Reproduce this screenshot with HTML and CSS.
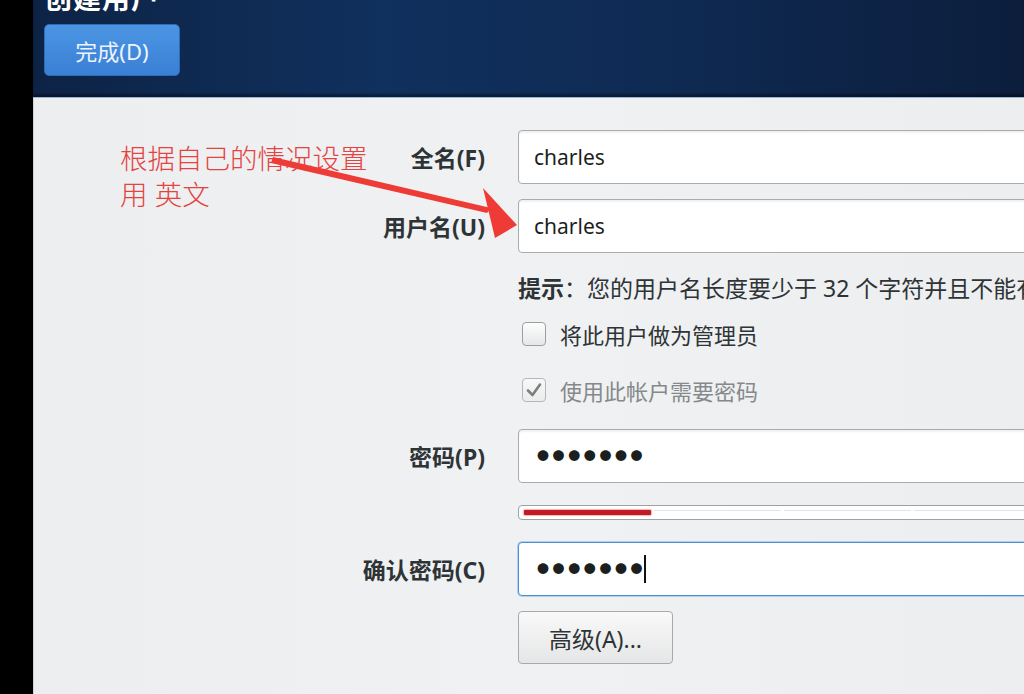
FILE: index.html
```html
<!DOCTYPE html>
<html lang="zh-CN">
<head>
    <meta charset="UTF-8">
    <meta name="viewport" content="width=device-width, initial-scale=1.0">
    <title>创建用户</title>
    <link rel="stylesheet" href="styles.css">
</head>
<body>
    <div class="screen">
        <div class="edge"></div>

        <div class="window">
            <header class="header">
                <h1 class="title">创建用户</h1>
                <button class="done-btn">完成(D)</button>
            </header>

            <main class="content">
                <div class="note">
                    <p>根据自己的情况设置</p>
                    <p>用 英文</p>
                    <svg class="arrow" width="300" height="90" viewBox="0 0 300 90">
                        <polygon points="0,12 2,6 220,57 216,62" fill="#ef3b36"/>
                        <polygon points="212,37 246,74 224,87" fill="#ef3b36"/>
                    </svg>
                </div>

                <div class="row row-full">
                    <label class="label">全名(F)</label>
                    <div class="entry">charles</div>
                </div>

                <div class="row row-user">
                    <label class="label">用户名(U)</label>
                    <div class="entry">charles</div>
                </div>

                <div class="row row-hint">
                    <span></span>
                    <p class="hint"><b>提示</b>：您的用户名长度要少于 32 个字符并且不能有空格。</p>
                </div>

                <div class="row row-admin">
                    <span></span>
                    <div class="check">
                        <span class="box"></span>
                        <span>将此用户做为管理员</span>
                    </div>
                </div>

                <div class="row row-pwreq">
                    <span></span>
                    <div class="check check-off">
                        <span class="box">
                            <svg width="18" height="18" viewBox="0 0 18 18">
                                <path d="M3 9.5 L7.5 14 L15 3.5" fill="none" stroke="#7c7f82" stroke-width="2.6" stroke-linecap="round" stroke-linejoin="round"/>
                            </svg>
                        </span>
                        <span>使用此帐户需要密码</span>
                    </div>
                </div>

                <div class="row row-pw">
                    <label class="label">密码(P)</label>
                    <div class="entry dots">●●●●●●●</div>
                </div>

                <div class="row row-meter">
                    <span></span>
                    <div class="meter">
                        <span class="seg seg-red"></span>
                        <span class="seg"></span>
                        <span class="seg"></span>
                        <span class="seg"></span>
                    </div>
                </div>

                <div class="row row-confirm">
                    <label class="label">确认密码(C)</label>
                    <div class="entry dots focused">●●●●●●●<span class="caret"></span></div>
                </div>

                <div class="row row-adv">
                    <span></span>
                    <div><button class="adv-btn">高级(A)...</button></div>
                </div>
            </main>
        </div>
    </div>
</body>
</html>
```

FILE: styles.css
```css
* {
    margin: 0;
    padding: 0;
    box-sizing: border-box;
}

body {
    width: 1024px;
    height: 694px;
    overflow: hidden;
    background: #000;
    font-family: 'Noto Sans', 'Noto Sans CJK SC', sans-serif;
    color: #2e3436;
}

.screen {
    display: flex;
    height: 694px;
}

.edge {
    width: 33px;
    flex-shrink: 0;
    background: #000;
}

.window {
    flex: 1;
    display: flex;
    flex-direction: column;
    overflow: hidden;
}

.header {
    height: 98px;
    flex-shrink: 0;
    padding-left: 11px;
    background: linear-gradient(90deg, #0d2346 0%, #10305d 35%, #0f2b55 60%, #0c1e3c 100%);
    border-bottom: 1px solid #9db3cf;
    box-shadow: inset 0 -3px 2px rgba(0, 0, 0, 0.35);
}

.title {
    font-size: 28px;
    font-weight: 700;
    color: #fff;
    line-height: 28px;
    margin-top: -16px;
    height: 12px;
    letter-spacing: 1px;
}

.done-btn {
    margin-top: 28px;
    width: 136px;
    height: 52px;
    border: 1px solid #2f6cb8;
    border-radius: 5px;
    background: linear-gradient(180deg, #4c95e3 0%, #3a80d6 100%);
    color: #eef4fc;
    font-family: 'Noto Sans', 'Noto Sans CJK SC', sans-serif;
    font-size: 22px;
}

.content {
    flex: 1;
    position: relative;
    background: linear-gradient(90deg, #eceef0 0%, #f0f1f2 50%, #edeef0 100%);
    border-left: 1px solid #d0d3d6;
    padding-top: 32px;
}

.note {
    position: absolute;
    left: 86px;
    top: 43px;
    color: #e4433f;
    font-size: 27.5px;
    line-height: 36px;
    font-weight: 300;
}

.arrow {
    position: absolute;
    left: 151px;
    top: 10px;
}

.row {
    display: grid;
    grid-template-columns: 452px 580px;
    column-gap: 33px;
    align-items: center;
    margin-left: -1px;
}

.label {
    text-align: right;
    font-size: 23px;
    font-weight: 700;
    color: #2e3436;
}

.entry {
    height: 54px;
    display: flex;
    align-items: center;
    padding-left: 15px;
    background: #fff;
    border: 1px solid #a9abad;
    border-radius: 4px;
    box-shadow: inset 0 2px 2px rgba(0, 0, 0, 0.06);
    font-size: 21px;
    color: #1c1f20;
}

.dots {
    font-size: 12px;
    letter-spacing: 3.6px;
    padding-left: 18px;
}

.focused {
    border-color: #4a90d9;
    box-shadow: 0 0 0 1px rgba(74, 144, 217, 0.35);
}

.caret {
    display: inline-block;
    width: 2px;
    height: 28px;
    background: #111;
    margin-left: -2px;
}

.row-user {
    margin-top: 15px;
}

.row-hint {
    margin-top: 17px;
    height: 30px;
}

.hint {
    font-size: 23px;
    white-space: nowrap;
    color: #2e3436;
}

.hint b {
    font-weight: 700;
}

.row-admin {
    margin-top: 18px;
    height: 30px;
}

.row-pwreq {
    margin-top: 26px;
    height: 30px;
}

.check {
    display: flex;
    align-items: center;
    gap: 14px;
    font-size: 22px;
    padding-left: 4px;
}

.check-off {
    color: #85898c;
}

.box {
    width: 24px;
    height: 24px;
    border: 1px solid #9c9fa2;
    border-radius: 4px;
    background: linear-gradient(180deg, #fdfdfd 0%, #e6e7e8 100%);
    display: flex;
    align-items: center;
    justify-content: center;
}

.check-off .box {
    border-color: #b4b7ba;
    background: linear-gradient(180deg, #f8f8f8 0%, #ebecec 100%);
}

.row-pw {
    margin-top: 25px;
}

.row-meter {
    margin-top: 22px;
}

.meter {
    height: 15px;
    display: flex;
    gap: 3px;
    align-items: center;
    padding: 0 5px;
    background: #fff;
    border: 1px solid #9ea1a4;
    border-radius: 4px;
}

.seg {
    width: 127px;
    height: 5px;
    border-top: 1px solid #e3e4e5;
}

.seg-red {
    background: #c01c28;
    border-top: none;
    border-radius: 1px;
    box-shadow: 0 0 1px 1px rgba(232, 80, 80, 0.45);
}

.row-confirm {
    margin-top: 22px;
}

.row-adv {
    margin-top: 15px;
}

.adv-btn {
    width: 155px;
    height: 53px;
    border: 1px solid #a7aaad;
    border-radius: 4px;
    background: linear-gradient(180deg, #f9f9f9 0%, #e5e6e7 100%);
    font-family: 'Noto Sans', 'Noto Sans CJK SC', sans-serif;
    font-size: 23px;
    color: #2e3436;
}
```
